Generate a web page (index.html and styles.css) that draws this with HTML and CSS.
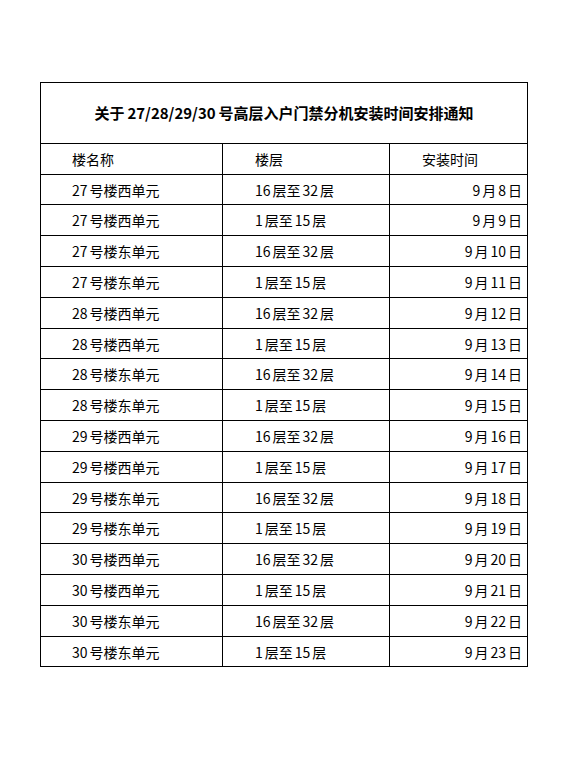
FILE: index.html
```html
<!DOCTYPE html>
<html lang="zh-CN">
<head>
<meta charset="utf-8">
<title>关于27/28/29/30号高层入户门禁分机安装时间安排通知</title>
<link rel="stylesheet" href="styles.css">
</head>
<body>
<div class="sheet">
  <div class="cell title">关于<span class="n tn">27/28/29/30</span>号高层入户门禁分机安装时间安排通知</div>
  <div class="cell head c1">楼名称</div>
  <div class="cell head c2">楼层</div>
  <div class="cell head c3">安装时间</div>

  <div class="cell c1"><span class="n">27</span>号楼西单元</div><div class="cell c2"><span class="n">16</span>层至<span class="n">32</span>层</div><div class="cell c3 date"><span class="n">9</span>月<span class="n">8</span>日</div>
  <div class="cell c1"><span class="n">27</span>号楼西单元</div><div class="cell c2"><span class="n">1</span>层至<span class="n">15</span>层</div><div class="cell c3 date"><span class="n">9</span>月<span class="n">9</span>日</div>
  <div class="cell c1"><span class="n">27</span>号楼东单元</div><div class="cell c2"><span class="n">16</span>层至<span class="n">32</span>层</div><div class="cell c3 date"><span class="n">9</span>月<span class="n">10</span>日</div>
  <div class="cell c1"><span class="n">27</span>号楼东单元</div><div class="cell c2"><span class="n">1</span>层至<span class="n">15</span>层</div><div class="cell c3 date"><span class="n">9</span>月<span class="n">11</span>日</div>
  <div class="cell c1"><span class="n">28</span>号楼西单元</div><div class="cell c2"><span class="n">16</span>层至<span class="n">32</span>层</div><div class="cell c3 date"><span class="n">9</span>月<span class="n">12</span>日</div>
  <div class="cell c1"><span class="n">28</span>号楼西单元</div><div class="cell c2"><span class="n">1</span>层至<span class="n">15</span>层</div><div class="cell c3 date"><span class="n">9</span>月<span class="n">13</span>日</div>
  <div class="cell c1"><span class="n">28</span>号楼东单元</div><div class="cell c2"><span class="n">16</span>层至<span class="n">32</span>层</div><div class="cell c3 date"><span class="n">9</span>月<span class="n">14</span>日</div>
  <div class="cell c1"><span class="n">28</span>号楼东单元</div><div class="cell c2"><span class="n">1</span>层至<span class="n">15</span>层</div><div class="cell c3 date"><span class="n">9</span>月<span class="n">15</span>日</div>
  <div class="cell c1"><span class="n">29</span>号楼西单元</div><div class="cell c2"><span class="n">16</span>层至<span class="n">32</span>层</div><div class="cell c3 date"><span class="n">9</span>月<span class="n">16</span>日</div>
  <div class="cell c1"><span class="n">29</span>号楼西单元</div><div class="cell c2"><span class="n">1</span>层至<span class="n">15</span>层</div><div class="cell c3 date"><span class="n">9</span>月<span class="n">17</span>日</div>
  <div class="cell c1"><span class="n">29</span>号楼东单元</div><div class="cell c2"><span class="n">16</span>层至<span class="n">32</span>层</div><div class="cell c3 date"><span class="n">9</span>月<span class="n">18</span>日</div>
  <div class="cell c1"><span class="n">29</span>号楼东单元</div><div class="cell c2"><span class="n">1</span>层至<span class="n">15</span>层</div><div class="cell c3 date"><span class="n">9</span>月<span class="n">19</span>日</div>
  <div class="cell c1"><span class="n">30</span>号楼西单元</div><div class="cell c2"><span class="n">16</span>层至<span class="n">32</span>层</div><div class="cell c3 date"><span class="n">9</span>月<span class="n">20</span>日</div>
  <div class="cell c1"><span class="n">30</span>号楼西单元</div><div class="cell c2"><span class="n">1</span>层至<span class="n">15</span>层</div><div class="cell c3 date"><span class="n">9</span>月<span class="n">21</span>日</div>
  <div class="cell c1"><span class="n">30</span>号楼东单元</div><div class="cell c2"><span class="n">16</span>层至<span class="n">32</span>层</div><div class="cell c3 date"><span class="n">9</span>月<span class="n">22</span>日</div>
  <div class="cell c1"><span class="n">30</span>号楼东单元</div><div class="cell c2"><span class="n">1</span>层至<span class="n">15</span>层</div><div class="cell c3 date"><span class="n">9</span>月<span class="n">23</span>日</div>
</div>
</body>
</html>
```

FILE: styles.css
```css
html, body {
  margin: 0;
  padding: 0;
  background: #ffffff;
}

body {
  padding: 82px 0 0 40px;
  font-family: "Noto Sans CJK SC", "DejaVu Sans", sans-serif;
  font-size: 14px;
  color: #000000;
}

.sheet {
  display: grid;
  grid-template-columns: 182px 167px 138px;
  grid-template-rows: 61px 30.7px;
  grid-auto-rows: 30.8px;
  width: max-content;
  border-left: 1px solid #000;
  border-top: 1px solid #000;
}

.cell {
  box-sizing: border-box;
  border-right: 1px solid #000;
  border-bottom: 1px solid #000;
  display: flex;
  align-items: center;
  line-height: 1;
  white-space: nowrap;
}

.title {
  grid-column: 1 / span 3;
  justify-content: center;
  font-size: 15px;
  font-weight: 700;
  padding-bottom: 2px;
}

.c1 {
  padding-left: 31px;
}

.c2 {
  padding-left: 32px;
}

.c3 {
  padding-left: 32px;
}

.date {
  justify-content: flex-end;
  padding-left: 0;
  padding-right: 5px;
}

.n {
  margin: 0 2px;
}

.n:first-child {
  margin-left: 0;
}

.title .tn {
  margin: 0 3px;
}
```
